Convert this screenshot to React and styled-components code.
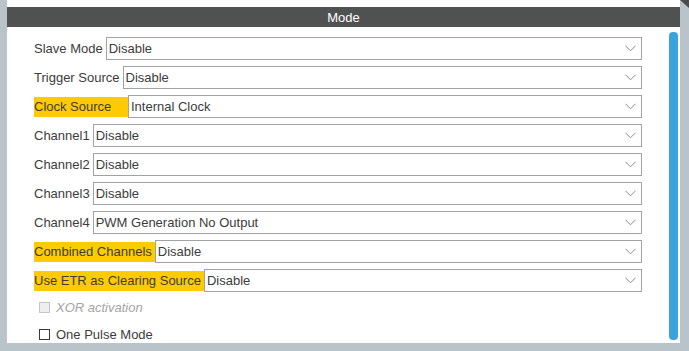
import React from 'react';
import styled, { createGlobalStyle } from 'styled-components';

const GlobalStyle = createGlobalStyle`
  html, body {
    margin: 0;
    padding: 0;
    background: #ffffff;
  }
  body {
    font-family: "Liberation Sans", Arial, sans-serif;
  }
`;

const Frame = styled.div`
  position: relative;
  width: 689px;
  height: 351px;
  box-sizing: border-box;
  background: #b9c3ca;
  padding: 0 9px 8px 7px;
  display: flex;
`;

const Corner = styled.div`
  position: absolute;
  top: 0;
  right: 0;
  width: 0;
  height: 0;
  border-top: 8px solid #4a4c4c;
  border-left: 9px solid transparent;
`;

const Panel = styled.div`
  flex: 1;
  background: #ffffff;
  padding-top: 7px;
  display: flex;
  flex-direction: column;
  overflow: hidden;
`;

const Header = styled.div`
  height: 20px;
  background: #505251;
  color: #ffffff;
  font-size: 13px;
  display: flex;
  align-items: center;
  justify-content: center;
`;

const Body = styled.div`
  flex: 1;
  display: flex;
  min-height: 0;
`;

const Content = styled.div`
  flex: 1;
  padding: 10px 27px 0 27px;
  display: flex;
  flex-direction: column;
  gap: 6px;
`;

const Row = styled.div`
  display: flex;
  align-items: center;
  height: 23px;
`;

const Label = styled.span`
  display: inline-flex;
  align-items: center;
  height: 20px;
  box-sizing: border-box;
  padding-right: 3px;
  font-size: 13px;
  color: #3c3c3c;
  white-space: nowrap;
  background: ${p => (p.$hl ? '#fdcb00' : 'transparent')};
  min-width: ${p => p.$minWidth || 0}px;
`;

const Select = styled.div`
  flex: 1;
  height: 23px;
  box-sizing: border-box;
  border: 1px solid #a2a2a2;
  background: #ffffff;
  display: flex;
  align-items: center;
  justify-content: space-between;
  padding: 0 5px 0 2px;
  font-size: 13px;
  color: #3c3c3c;
`;

const CheckGroup = styled.div`
  display: flex;
  flex-direction: column;
  margin-top: -4px;
`;

const CheckRow = styled.div`
  display: flex;
  align-items: center;
  height: 27px;
  padding-left: 5px;
  gap: 6px;
  font-size: 13px;
  font-style: ${p => (p.$disabled ? 'italic' : 'normal')};
  color: ${p => (p.$disabled ? '#a4a4a4' : '#3c3c3c')};
`;

const Box = styled.span`
  width: 11px;
  height: 11px;
  box-sizing: border-box;
  border: 1px solid ${p => (p.$disabled ? '#c4c4c4' : '#3a3a3a')};
  background: ${p => (p.$disabled ? '#eeeeee' : '#ffffff')};
`;

const Track = styled.div`
  width: 9px;
  padding: 5px 2px 3px 0;
  display: flex;
`;

const Thumb = styled.div`
  flex: 1;
  background: #3aa3dc;
  border-radius: 4px;
`;

const Chevron = () => (
  <svg width="11" height="7" viewBox="0 0 11 7">
    <path d="M0.5 0.8 L5.5 5.8 L10.5 0.8" fill="none" stroke="#8a8a8a" strokeWidth="1" />
  </svg>
);

const fields = [
  { label: 'Slave Mode', value: 'Disable' },
  { label: 'Trigger Source', value: 'Disable' },
  { label: 'Clock Source', value: 'Internal Clock', hl: true, minWidth: 94 },
  { label: 'Channel1', value: 'Disable' },
  { label: 'Channel2', value: 'Disable' },
  { label: 'Channel3', value: 'Disable' },
  { label: 'Channel4', value: 'PWM Generation No Output' },
  { label: 'Combined Channels', value: 'Disable', hl: true },
  { label: 'Use ETR as Clearing Source', value: 'Disable', hl: true },
];

export default function App() {
  return (
    <>
      <GlobalStyle />
      <Frame>
        <Corner />
        <Panel>
          <Header>Mode</Header>
          <Body>
            <Content>
              {fields.map(f => (
                <Row key={f.label}>
                  <Label $hl={f.hl} $minWidth={f.minWidth}>{f.label}</Label>
                  <Select>
                    <span>{f.value}</span>
                    <Chevron />
                  </Select>
                </Row>
              ))}
              <CheckGroup>
                <CheckRow $disabled>
                  <Box $disabled />
                  XOR activation
                </CheckRow>
                <CheckRow>
                  <Box />
                  One Pulse Mode
                </CheckRow>
              </CheckGroup>
            </Content>
            <Track>
              <Thumb />
            </Track>
          </Body>
        </Panel>
      </Frame>
    </>
  );
}
